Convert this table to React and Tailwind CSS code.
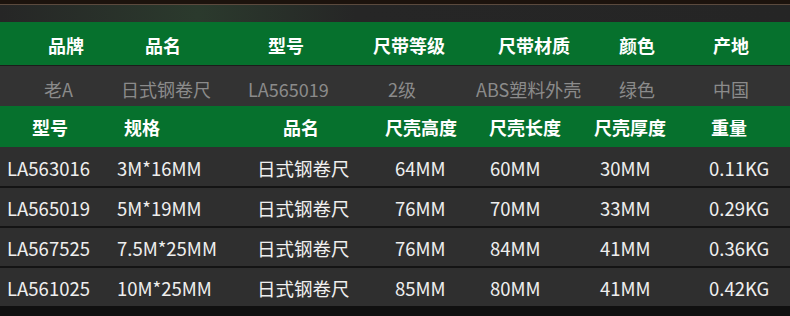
const brandHead = ['品牌', '品名', '型号', '尺带等级', '尺带材质', '颜色', '产地']
const brandRow = ['老A', '日式钢卷尺', 'LA565019', '2级', 'ABS塑料外壳', '绿色', '中国']
const specHead = ['型号', '规格', '品名', '尺壳高度', '尺壳长度', '尺壳厚度', '重量']
const specRows = [
  ['LA563016', '3M*16MM', '日式钢卷尺', '64MM', '60MM', '30MM', '0.11KG'],
  ['LA565019', '5M*19MM', '日式钢卷尺', '76MM', '70MM', '33MM', '0.29KG'],
  ['LA567525', '7.5M*25MM', '日式钢卷尺', '76MM', '84MM', '41MM', '0.36KG'],
  ['LA561025', '10M*25MM', '日式钢卷尺', '85MM', '80MM', '41MM', '0.42KG'],
]

const font = { fontFamily: '"Noto Sans CJK SC", "Noto Sans", sans-serif' }

const App = () => {
  return (
    <div className="w-[790px] h-[316px] overflow-hidden bg-[#111] flex flex-col text-[18px] leading-none" style={font}>
      {/* top frame */}
      <div className="h-[4px] bg-[#1c130d]" />
      <div className="h-[1px] bg-[#5b4a3e]" />
      <div className="h-[17px] bg-[linear-gradient(90deg,#262626_0%,#2b3a2d_25%,#262626_45%,#252525_100%)]" />

      {/* brand header */}
      <div className="h-[43px] bg-[#06712d] grid grid-cols-[97px_123px_105px_125px_121px_94px_1fr] pl-[48px] items-center pt-[3px] font-bold text-white">
        {brandHead.map((t) => (
          <div key={t} className="whitespace-nowrap">{t}</div>
        ))}
      </div>
      <div className="h-[1px] bg-[#1c1c1c]" />
      <div className="h-[40px] bg-[#333333] grid grid-cols-[77px_127px_140px_88px_143px_94px_1fr] pl-[44px] items-center pt-[5px] text-[#8b8b8b]">
        {brandRow.map((t) => (
          <div key={t} className="whitespace-nowrap">{t}</div>
        ))}
      </div>

      {/* spec header */}
      <div className="h-[41px] bg-[#06712d] grid grid-cols-[92px_159px_102px_104px_105px_117px_1fr] pl-[32px] items-center pt-[1px] font-bold text-white">
        {specHead.map((t) => (
          <div key={t} className="whitespace-nowrap">{t}</div>
        ))}
      </div>

      {/* spec rows */}
      <div className="flex flex-col gap-[2px] bg-[#141414]">
        {specRows.map((r, i) => (
          <div
            key={r[0]}
            className={`h-[38px] bg-[#2f2f2f] grid grid-cols-[110px_140px_138px_95px_110px_109px_1fr] pl-[7px] items-center pt-[3px] text-[18.5px] text-[#efefef] ${i === 0 ? 'h-[39px]' : ''}`}
          >
            {r.map((t, j) => (
              <div key={j} className="whitespace-nowrap">{t}</div>
            ))}
          </div>
        ))}
      </div>
      <div className="flex-1 bg-[#101010]" />
    </div>
  )
}

export default App
